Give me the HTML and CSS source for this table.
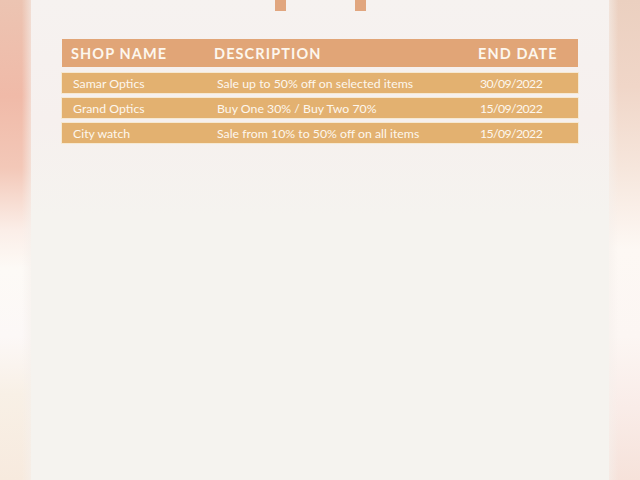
FILE: index.html
```html
<!DOCTYPE html>
<html>
<head>
<meta charset="utf-8">
<link rel="stylesheet" href="styles.css">
</head>
<body>
<div class="page">
  <div class="side side-left"></div>
  <main class="panel">
    <div class="marks"><span class="mark"></span><span class="mark"></span></div>
    <div class="table">
      <div class="row head">
        <div class="cell">SHOP NAME</div>
        <div class="cell">DESCRIPTION</div>
        <div class="cell">END DATE</div>
      </div>
      <div class="row item">
        <div class="cell">Samar Optics</div>
        <div class="cell">Sale up to 50% off on selected items</div>
        <div class="cell date">30/09/2022</div>
      </div>
      <div class="row item">
        <div class="cell">Grand Optics</div>
        <div class="cell">Buy One 30% / Buy Two 70%</div>
        <div class="cell date">15/09/2022</div>
      </div>
      <div class="row item">
        <div class="cell">City watch</div>
        <div class="cell">Sale from 10% to 50% off on all items</div>
        <div class="cell date">15/09/2022</div>
      </div>
    </div>
  </main>
  <div class="side side-right"></div>
</div>
</body>
</html>
```
FILE: styles.css
```css
html, body {
  margin: 0;
  padding: 0;
  height: 100%;
}
body {
  font-family: "Lato", "Open Sans", sans-serif;
  background: #f5f2ee;
}
.page {
  display: flex;
  width: 640px;
  height: 480px;
  overflow: hidden;
}
.side {
  width: 31px;
  flex: none;
}
.side-left {
  background:
    linear-gradient(to right, rgba(255,255,255,0) 70%, rgba(245,240,236,0.6) 100%),
    linear-gradient(to bottom, #ecc4b2 0%, #f0baa8 20%, #f3c8b8 35%, #fbeee8 48%, #fdfaf6 56%, #fcf8f7 70%, #f8f0e6 82%, #f7eade 100%);
}
.side-right {
  background:
    linear-gradient(to left, rgba(255,255,255,0) 70%, rgba(245,240,236,0.6) 100%),
    linear-gradient(to bottom, #ebd0c0 0%, #f0d6c8 18%, #f6e6dc 35%, #fdf8f4 52%, #fcf6f3 70%, #f9ece8 85%, #f6e2da 100%);
}
.panel {
  flex: 1;
  display: flex;
  flex-direction: column;
  padding: 0 31px;
  background: linear-gradient(to bottom, #f6f2f0 0%, #f6f0ee 25%, #f5f3ef 45%, #f5f3ef 100%);
}
.marks {
  display: flex;
  justify-content: center;
  gap: 69px;
  height: 11px;
  padding-left: 1px;
}
.mark {
  width: 11px;
  height: 11px;
  background: #e1a67f;
}
.table {
  margin-top: 28px;
  display: flex;
  flex-direction: column;
  gap: 5px;
}
.row {
  display: grid;
  align-items: center;
  color: #fdf7ee;
}
.head {
  height: 28px;
  margin-bottom: 1px;
  grid-template-columns: 143px 264px 1fr;
  padding-left: 9px;
  background: #e1a577;
  font-weight: 700;
  font-size: 14.5px;
  letter-spacing: 1.1px;
}
.item {
  height: 20px;
  grid-template-columns: 144px 263px 1fr;
  padding-left: 11px;
  background: #e3b170;
  box-shadow: 0 0 0 1px #f6e9d2;
  font-size: 12.3px;
}
.date {
  letter-spacing: -0.6px;
}
```
